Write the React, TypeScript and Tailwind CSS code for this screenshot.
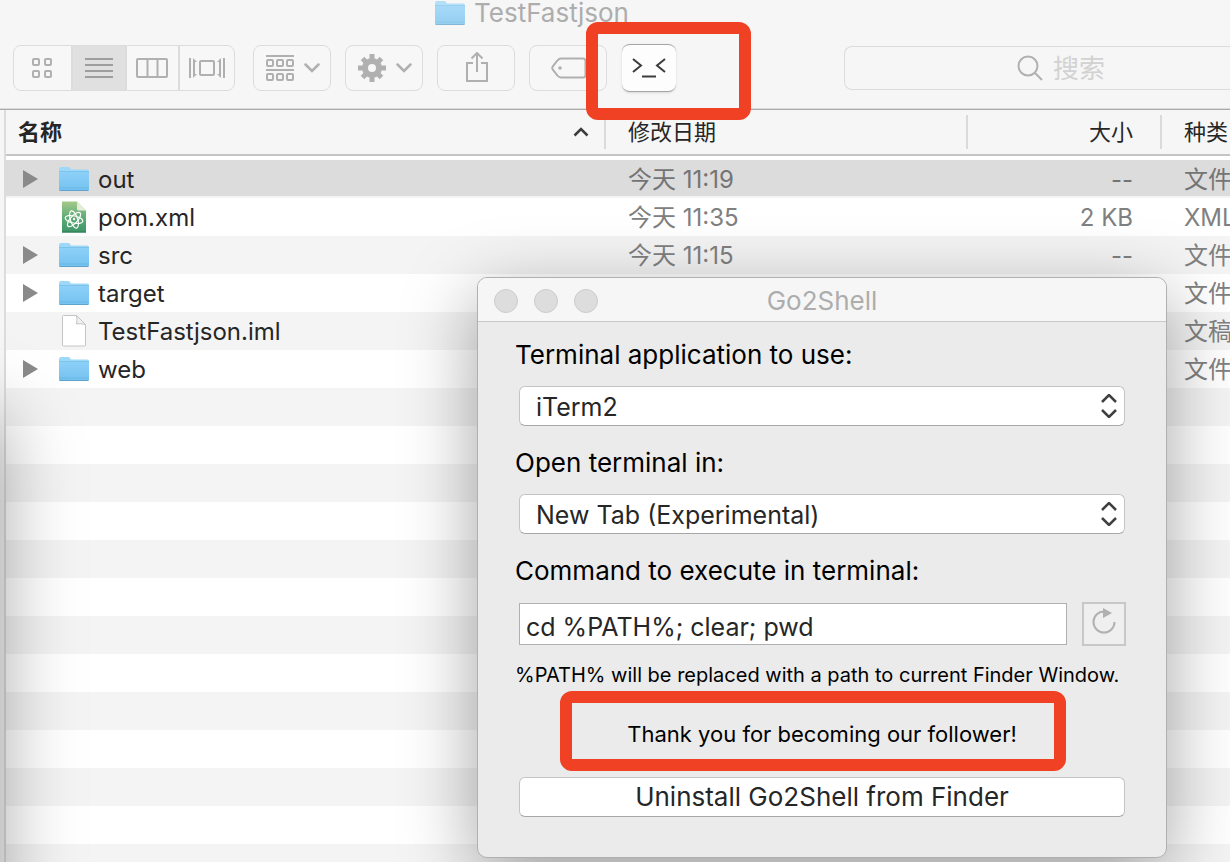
import { useState } from "react";
import type { ReactNode } from "react";

type Entry = {
  name: string;
  icon: "folder" | "atom" | "file";
  date: string;
  size: string;
  kind: string;
};

const entries: Entry[] = [
  { name: "out", icon: "folder", date: "今天 11:19", size: "--", kind: "文件" },
  { name: "pom.xml", icon: "atom", date: "今天 11:35", size: "2 KB", kind: "XML" },
  { name: "src", icon: "folder", date: "今天 11:15", size: "--", kind: "文件" },
  { name: "target", icon: "folder", date: "", size: "", kind: "文件" },
  { name: "TestFastjson.iml", icon: "file", date: "", size: "", kind: "文稿" },
  { name: "web", icon: "folder", date: "", size: "", kind: "文件" },
];

function FolderIcon({ id }: { id: string }) {
  return (
    <svg width="32" height="26" viewBox="0 0 32 26" aria-hidden="true">
      <defs>
        <linearGradient id={id} x1="0" y1="0" x2="0" y2="1">
          <stop offset="0" stopColor="#8dd0f8" />
          <stop offset="1" stopColor="#74c2f0" />
        </linearGradient>
      </defs>
      <path d="M1 3.2Q1 1 3 1h7q1.200 0 2 1l1 1.500h16q2 0 2 2V23H1z" fill="#9dd8f8" />
      <path d="M1 6h30v17.500q0 1-1 1H2q-1 0-1-1z" fill={`url(#${id})`} />
      <path d="M1 5.500h30" stroke="#7cc3ec" strokeWidth="1" />
      <path d="M1.500 22h29" stroke="#69b2e0" strokeWidth="0.700" />
      <path d="M1.500 24.500h29" stroke="#5fa3cc" strokeWidth="1" />
    </svg>
  );
}

function AtomFileIcon() {
  return (
    <svg width="26" height="32" viewBox="0 0 26 32" aria-hidden="true">
      <defs>
        <linearGradient id="atom-fill" x1="0" y1="0" x2="0" y2="1">
          <stop offset="0" stopColor="#a3c98a" />
          <stop offset="0.500" stopColor="#61ad76" />
          <stop offset="1" stopColor="#3d9468" />
        </linearGradient>
      </defs>
      <path d="M1 .5h15L25 9.500V31.500H1z" fill="url(#atom-fill)" />
      <path d="M1 31h24" stroke="#2f7a52" />
      <path d="M16 .5L25 9.500H17.500Q16 9.500 16 8z" fill="#e4ecdc" />
      <g fill="none" stroke="#fff" strokeWidth="1.200">
        <ellipse cx="13" cy="18.500" rx="9" ry="3.600" transform="rotate(12 13 18.500)" />
        <ellipse cx="13" cy="18.500" rx="9" ry="3.600" transform="rotate(72 13 18.500)" />
        <ellipse cx="13" cy="18.500" rx="9" ry="3.600" transform="rotate(132 13 18.500)" />
      </g>
      <circle cx="13" cy="18" r="1.200" fill="#fff" />
    </svg>
  );
}

function FileIcon() {
  return (
    <svg width="26" height="32" viewBox="0 0 26 32" aria-hidden="true">
      <path d="M1.500 1.500q0-1 1-1H15.500L24.500 9.500V30q0 1-1 1h-21q-1 0-1-1z" fill="#fff" stroke="#c4c4c4" />
      <path d="M15.500 .5q1.200 4 0 8.500 4-1 9 .5z" fill="#f1f1f1" stroke="#c4c4c4" />
    </svg>
  );
}

function EntryIcon({ entry }: { entry: Entry }) {
  if (entry.icon === "folder") return <FolderIcon id={`folder-${entry.name}`} />;
  return entry.icon === "atom" ? <AtomFileIcon /> : <FileIcon />;
}

function Chevron() {
  return (
    <svg width="16" height="10" viewBox="0 0 16 10" fill="none" stroke="#b0b0b0" strokeWidth="2.500" aria-hidden="true">
      <path d="M1.500 1.500L8 8l6.500-6.500" strokeLinecap="round" />
    </svg>
  );
}

function GearIcon() {
  return (
    <svg width="28" height="28" viewBox="0 0 28 28" aria-hidden="true">
      <g stroke="#b0b0b0" strokeWidth="5">
        <path d="M14 0v9M14 19v9M0 14h9M19 14h9" />
        <path d="M4.500 4.500l5 5M18.500 18.500l5 5M4.500 23.500l5-5M18.500 9.500l5-5" />
      </g>
      <circle cx="14" cy="14" r="7" fill="none" stroke="#b0b0b0" strokeWidth="6" />
    </svg>
  );
}

function ToolButton({ label, children }: { label: string; children: ReactNode }) {
  return (
    <button
      type="button"
      aria-label={label}
      className="flex h-[46px] w-[78px] shrink-0 items-center justify-center gap-2.5 rounded-lg border border-[#dcdcdc] bg-[#f7f7f7] pl-0.5"
    >
      {children}
    </button>
  );
}

function ViewSwitcher() {
  const segment = "flex h-full w-[54px] items-center justify-center";
  return (
    <div className="flex h-[46px] w-[222px] shrink-0 divide-x-2 divide-[#dcdcdc] overflow-hidden rounded-lg border border-[#dcdcdc] bg-[#f7f7f7]">
      <button type="button" aria-label="图标" className="flex h-full w-[59px] items-center justify-center">
        <svg width="22" height="22" viewBox="0 0 22 22" fill="none" stroke="#b0b0b0" strokeWidth="2" aria-hidden="true">
          <rect x="2" y="2" width="6" height="6" rx="1" />
          <rect x="14" y="2" width="6" height="6" rx="1" />
          <rect x="2" y="14" width="6" height="6" rx="1" />
          <rect x="14" y="14" width="6" height="6" rx="1" />
        </svg>
      </button>
      <button type="button" aria-label="列表" aria-pressed="true" className="flex h-full w-[54px] items-center justify-center bg-[#e0e0e0]">
        <svg width="28" height="20" viewBox="0 0 28 20" stroke="#9e9e9e" strokeWidth="2" aria-hidden="true">
          <path d="M0 1h28M0 7h28M0 13h28M0 19h28" />
        </svg>
      </button>
      <button type="button" aria-label="分栏" className={segment}>
        <svg width="32" height="20" viewBox="0 0 32 20" fill="none" stroke="#b0b0b0" strokeWidth="2" aria-hidden="true">
          <rect x="1" y="1" width="30" height="18" rx="1" />
          <path d="M11.500 1v18M21.500 1v18" />
        </svg>
      </button>
      <button type="button" aria-label="画廊" className={segment}>
        <svg width="36" height="20" viewBox="0 0 36 20" fill="none" stroke="#b0b0b0" strokeWidth="2" aria-hidden="true">
          <path d="M1 0v20M35 0v20" />
          <rect x="11" y="3" width="14" height="14" rx="1" />
          <path d="M4 0L8 4H6V16H8L4 20zM32 0L28 4h2V16H28l4 4z" fill="#b0b0b0" stroke="none" />
        </svg>
      </button>
    </div>
  );
}

function Toolbar() {
  return (
    <header className="h-[110px] border-b border-[#ababab] bg-[#f6f6f6] shadow-[inset_0_-1px_0_#dadada]">
      <div className="flex h-[26px] items-center gap-2 pl-[434px] text-[26px] leading-[26px] text-[#adadad]">
        <span className="opacity-75">
          <FolderIcon id="folder-title" />
        </span>
        <h1>TestFastjson</h1>
      </div>
      <div className="flex items-center pt-[18px] pl-[13px]">
        <ViewSwitcher />
        <div className="ml-[18px] flex gap-[14px]">
          <ToolButton label="排列">
            <svg width="28" height="28" viewBox="0 0 28 28" fill="none" stroke="#b0b0b0" strokeWidth="2" aria-hidden="true">
              <path d="M0 2h28M0 16h28" />
              <rect x="1" y="6" width="6" height="6" rx="1" />
              <rect x="11" y="6" width="6" height="6" rx="1" />
              <rect x="21" y="6" width="6" height="6" rx="1" />
              <rect x="1" y="20" width="6" height="6" rx="1" />
              <rect x="11" y="20" width="6" height="6" rx="1" />
              <rect x="21" y="20" width="6" height="6" rx="1" />
            </svg>
            <Chevron />
          </ToolButton>
          <ToolButton label="操作">
            <GearIcon />
            <Chevron />
          </ToolButton>
          <ToolButton label="共享">
            <svg width="24" height="32" viewBox="0 0 24 32" fill="none" stroke="#b0b0b0" strokeWidth="2" aria-hidden="true">
              <path d="M8 11H2v18h20V11h-6M12 20V1M6.500 6.500L12 1l5.500 5.500" />
            </svg>
          </ToolButton>
          <ToolButton label="标签">
            <svg width="36" height="22" viewBox="0 0 36 22" fill="none" stroke="#b0b0b0" strokeWidth="2" aria-hidden="true">
              <path d="M10 1.500H32q2.500 0 2.500 2.500V18q0 2.500-2.500 2.500H10Q8 20.500 6.500 18.500L2 13q-1.500-2 0-4L6.500 3.500Q8 1.500 10 1.500z" />
              <circle cx="9" cy="11" r="1.800" fill="#b0b0b0" stroke="none" />
            </svg>
          </ToolButton>
        </div>
        <div className="relative ml-[15px] shrink-0">
          <button
            type="button"
            aria-label="Go2Shell"
            className="flex h-12 w-[54px] items-center justify-center rounded-lg border-y border-[#a5a5a5] bg-[#fdfdfd] shadow-sm"
          >
            <svg width="36" height="22" viewBox="0 0 36 22" fill="none" stroke="#3c3c3c" strokeWidth="2" aria-hidden="true">
              <path d="M2 2l8 6.500L2 15M34 2l-8 6.500 8 6.500M11 19.500h14" />
            </svg>
          </button>
          <div className="pointer-events-none absolute -top-[22px] -left-9 h-[98px] w-[165px] rounded-xl border-12 border-[#f04124]" />
        </div>
        <label className="ml-[168px] flex h-[44px] min-w-0 flex-1 items-center gap-2.5 rounded-l-lg border border-r-0 border-[#dcdcdc] pl-[172px]">
          <svg className="shrink-0" width="26" height="26" viewBox="0 0 26 26" fill="none" stroke="#b0b0b0" strokeWidth="2" aria-hidden="true">
            <circle cx="11" cy="11" r="9.500" />
            <path d="M17.500 17.500L25 25" />
          </svg>
          <input
            type="search"
            aria-label="搜索"
            placeholder="搜索"
            className="w-full min-w-0 bg-transparent pt-0.5 text-[26px] leading-9 outline-none placeholder:text-[#d2d2d2]"
          />
        </label>
      </div>
    </header>
  );
}

function FileTable() {
  const divider = "my-[5px] flex h-[34px] items-center border-l-2 border-[#dadada]";
  return (
    <table className="w-full table-fixed border-collapse">
      <colgroup>
        <col className="w-[598px]" />
        <col />
        <col className="w-[194px]" />
        <col className="w-[70px]" />
      </colgroup>
      <thead className="border-b-2 border-[#c4c4c4] bg-[#f6f6f6] text-[22px] text-[#262626]">
        <tr>
          <th className="p-0 text-left font-bold">
            <div className="flex h-[44px] items-center justify-between pr-[15px] pl-3">
              名称
              <svg width="16" height="10" viewBox="0 0 16 10" fill="none" stroke="#3c3c3c" strokeWidth="2.500" aria-hidden="true">
                <path d="M1.500 8.500L8 2l6.500 6.500" />
              </svg>
            </div>
          </th>
          <th className="p-0 font-normal">
            <div className={`${divider} pl-[22px]`}>修改日期</div>
          </th>
          <th className="p-0 font-normal">
            <div className={`${divider} justify-end pr-[27px]`}>大小</div>
          </th>
          <th className="p-0 font-normal">
            <div className={`${divider} pl-[22px] whitespace-nowrap`}>种类</div>
          </th>
        </tr>
      </thead>
      <tbody className="text-[24px] leading-9 text-[#808080] before:block before:h-1">
        {entries.map((entry, i) => (
          <tr
            key={entry.name}
            className={
              i === 0
                ? "bg-[#dcdcdc] text-[#747474] shadow-[inset_0_-2px_0_#f4f4f4]"
                : i % 2
                  ? "bg-white"
                  : "bg-[#f4f4f4]"
            }
          >
            <td className="p-0">
              <div className="flex h-[38px] items-center pl-4 text-[#262626]">
                <span className="flex w-9 shrink-0">
                  {entry.icon === "folder" && (
                    <svg width="16" height="18" viewBox="0 0 16 18" aria-hidden="true">
                      <path d="M1 0l15 9L1 18z" fill="#8a8a8a" />
                    </svg>
                  )}
                </span>
                <span className="mr-2 flex w-8 shrink-0 justify-center">
                  <EntryIcon entry={entry} />
                </span>
                <span className="pt-0.5">{entry.name}</span>
              </div>
            </td>
            <td className="p-0 pt-0.5 pl-6">{entry.date}</td>
            <td className="p-0 pt-0.5 pr-[27px] text-right">{entry.size}</td>
            <td className="overflow-hidden p-0 pt-0.5 pl-6 whitespace-nowrap">{entry.kind}</td>
          </tr>
        ))}
      </tbody>
    </table>
  );
}

type PopupProps = {
  id: string;
  label: string;
  value: string;
  options: string[];
  onChange: (value: string) => void;
};

function PopupField({ id, label, value, options, onChange }: PopupProps) {
  return (
    <div className="mb-[21px]">
      <label htmlFor={id} className="-ml-1 block text-[26px] leading-8">
        {label}
      </label>
      <div className="relative mt-[15px]">
        <select
          id={id}
          value={value}
          onChange={(e) => onChange(e.target.value)}
          className="block h-10 w-full appearance-none rounded-md border border-[#c4c4c4] border-b-[#a8a8a8] bg-white px-4 pt-0.5 text-[25px] leading-8 text-[#262626]"
        >
          {options.map((option) => (
            <option key={option}>{option}</option>
          ))}
        </select>
        <svg
          className="pointer-events-none absolute top-2 right-2"
          width="16"
          height="24"
          viewBox="0 0 16 24"
          fill="none"
          stroke="#404040"
          strokeWidth="2.500"
          aria-hidden="true"
        >
          <path d="M1 8l7-7 7 7M1 16l7 7 7-7" />
        </svg>
      </div>
    </div>
  );
}

function Go2ShellDialog() {
  const [app, setApp] = useState("iTerm2");
  const [target, setTarget] = useState("New Tab (Experimental)");
  const [command, setCommand] = useState("cd %PATH%; clear; pwd");
  return (
    <section
      aria-label="Go2Shell"
      className="absolute top-[277px] left-[477px] w-[690px] overflow-hidden rounded-[10px] border border-[#b0b0b0] bg-[#ebebeb] text-black shadow-[0_20px_74px_rgba(0,0,0,0.36)]"
    >
      <div className="flex h-[44px] items-center border-b border-[#c8c8c8] bg-[#f6f6f6] px-4 pt-0.5">
        <div className="flex flex-1 gap-4">
          <button type="button" aria-label="Close" className="size-6 rounded-full border border-[#cccccc] bg-[#dddddd]" />
          <button type="button" aria-label="Minimize" className="size-6 rounded-full border border-[#cccccc] bg-[#dddddd]" />
          <button type="button" aria-label="Zoom" className="size-6 rounded-full border border-[#cccccc] bg-[#dddddd]" />
        </div>
        <h2 className="text-[26px] leading-8 text-[#adadad]">Go2Shell</h2>
        <div className="flex-1" />
      </div>
      <form className="px-[41px] pt-[17px] pb-10" onSubmit={(e) => e.preventDefault()}>
        <PopupField
          id="terminal-app"
          label="Terminal application to use:"
          value={app}
          options={["iTerm2", "Terminal"]}
          onChange={setApp}
        />
        <PopupField
          id="open-in"
          label="Open terminal in:"
          value={target}
          options={["New Tab (Experimental)", "New Window"]}
          onChange={setTarget}
        />
        <label htmlFor="command" className="-ml-1 block text-[26px] leading-8">
          Command to execute in terminal:
        </label>
        <div className="-mr-px mt-[15px] flex items-center gap-[15px]">
          <input
            id="command"
            value={command}
            onChange={(e) => setCommand(e.target.value)}
            className="h-[42px] min-w-0 flex-1 border border-[#b0b0b0] bg-white px-1.5 pt-1.5 text-[25px] leading-8 text-[#262626]"
          />
          <button
            type="button"
            aria-label="Reset command"
            className="flex size-[44px] justify-center border-2 border-[#c8c8c8] bg-[#efefef] pt-1"
          >
            <svg width="24" height="26" viewBox="0 0 24 26" aria-hidden="true">
              <path d="M12 3.500a10.500 10.500 0 1 0 10.500 10.500" fill="none" stroke="#b0b0b0" strokeWidth="2" />
              <path d="M11 0l9 5-9 5z" fill="#b0b0b0" />
            </svg>
          </button>
        </div>
        <p className="-mx-1 mt-[15px] text-[20px] leading-7 whitespace-nowrap">
          %PATH% will be replaced with a path to current Finder Window.
        </p>
        <div className="relative mt-0.5 pt-[29px] pb-[23px] text-center text-[22px] leading-7">
          <p>Thank you for becoming our follower!</p>
          <div className="pointer-events-none absolute inset-y-0 left-[41px] w-[506px] rounded-xl border-12 border-[#f04124]" />
        </div>
        <button
          type="button"
          className="mt-1.5 h-10 w-full rounded-md border border-[#c4c4c4] border-b-[#a8a8a8] bg-white text-[26px] leading-8 text-[#262626]"
        >
          Uninstall Go2Shell from Finder
        </button>
      </form>
    </section>
  );
}

export default function App() {
  return (
    <main className="relative flex h-screen flex-col overflow-hidden bg-[#f6f6f6] font-['Inter','Noto_Sans_CJK_SC',sans-serif]">
      <Toolbar />
      <div className="flex min-h-0 flex-1">
        <div className="w-1.5 shrink-0 border-r-2 border-[#dcdcdc]" />
        <div className="flex min-w-0 flex-1 flex-col bg-white">
          <FileTable />
          <div className="flex-1 bg-[repeating-linear-gradient(#f4f4f4_0px_38px,#ffffff_38px_76px)]" />
        </div>
      </div>
      <div className="pointer-events-none absolute top-[395px] -left-[400px] h-[700px] w-[400px] shadow-[0_20px_74px_rgba(0,0,0,0.36)]" />
      <Go2ShellDialog />
    </main>
  );
}
